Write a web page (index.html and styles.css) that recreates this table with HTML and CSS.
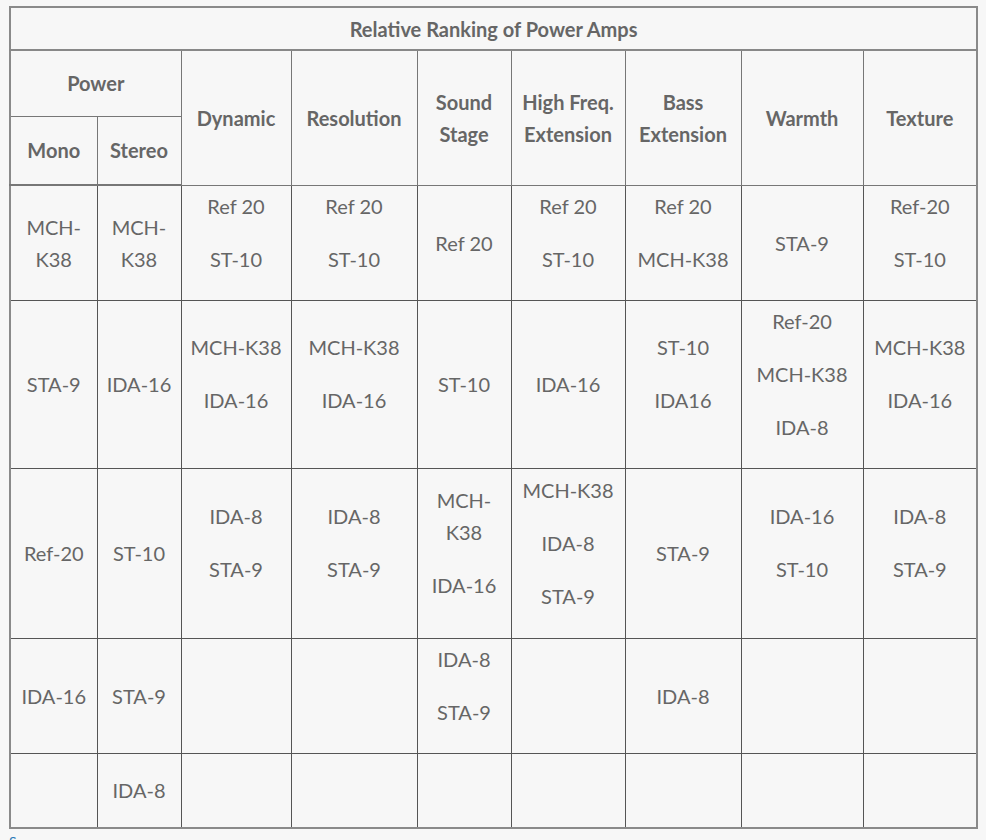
FILE: index.html
```html
<!DOCTYPE html>
<html>
<head>
<meta charset="utf-8">
<link rel="stylesheet" href="styles.css">
</head>
<body>
<table class="rank">
  <colgroup>
    <col class="c1"><col class="c2"><col class="c3"><col class="c4"><col class="c5"><col class="c6"><col class="c7"><col class="c8"><col class="c9">
  </colgroup>
  <thead>
    <tr class="r-title"><th colspan="9">Relative Ranking of Power Amps</th></tr>
    <tr class="r-h1">
      <th colspan="2">Power</th>
      <th rowspan="2">Dynamic</th>
      <th rowspan="2">Resolution</th>
      <th rowspan="2">Sound Stage</th>
      <th rowspan="2">High Freq. Extension</th>
      <th rowspan="2">Bass Extension</th>
      <th rowspan="2">Warmth</th>
      <th rowspan="2">Texture</th>
    </tr>
    <tr class="r-h2"><th>Mono</th><th>Stereo</th></tr>
  </thead>
  <tbody>
    <tr class="r1">
      <td>MCH-K38</td>
      <td>MCH-K38</td>
      <td><p>Ref 20</p><p>ST-10</p></td>
      <td><p>Ref 20</p><p>ST-10</p></td>
      <td>Ref 20</td>
      <td><p>Ref 20</p><p>ST-10</p></td>
      <td><p>Ref 20</p><p>MCH-K38</p></td>
      <td>STA-9</td>
      <td><p>Ref-20</p><p>ST-10</p></td>
    </tr>
    <tr class="r2">
      <td>STA-9</td>
      <td>IDA-16</td>
      <td><p>MCH-K38</p><p>IDA-16</p></td>
      <td><p>MCH-K38</p><p>IDA-16</p></td>
      <td>ST-10</td>
      <td>IDA-16</td>
      <td><p>ST-10</p><p>IDA16</p></td>
      <td><p>Ref-20</p><p>MCH-K38</p><p>IDA-8</p></td>
      <td><p>MCH-K38</p><p>IDA-16</p></td>
    </tr>
    <tr class="r3">
      <td>Ref-20</td>
      <td>ST-10</td>
      <td><p>IDA-8</p><p>STA-9</p></td>
      <td><p>IDA-8</p><p>STA-9</p></td>
      <td><p>MCH-K38</p><p>IDA-16</p></td>
      <td><p>MCH-K38</p><p>IDA-8</p><p>STA-9</p></td>
      <td>STA-9</td>
      <td><p>IDA-16</p><p>ST-10</p></td>
      <td><p>IDA-8</p><p>STA-9</p></td>
    </tr>
    <tr class="r4">
      <td>IDA-16</td>
      <td>STA-9</td>
      <td></td>
      <td></td>
      <td><p>IDA-8</p><p>STA-9</p></td>
      <td></td>
      <td>IDA-8</td>
      <td></td>
      <td></td>
    </tr>
    <tr class="r5">
      <td></td>
      <td>IDA-8</td>
      <td></td><td></td><td></td><td></td><td></td><td></td><td></td>
    </tr>
  </tbody>
</table>
<p class="credit">Source</p>
</body>
</html>
```
FILE: styles.css
```css
html, body {
  background: #f7f7f7;
}
body {
  margin: 0;
  padding: 6px 0 0 9px;
  font-family: Lato, "Open Sans", sans-serif;
  color: #666;
  font-size: 20px;
}
.rank {
  table-layout: fixed;
  border-collapse: collapse;
  width: 967px;
  border: 2px solid #8a8a8a;
}
.c1 { width: 87px; }
.c2 { width: 84px; }
.c3 { width: 110px; }
.c4 { width: 126px; }
.c5 { width: 94px; }
.c6 { width: 114px; }
.c7 { width: 116px; }
.c8 { width: 122px; }
.c9 { width: 114px; }
.rank th, .rank td {
  border: 1px solid #555;
  padding: 4px 5px;
  text-align: center;
  vertical-align: middle;
  line-height: 32px;
  font-size: 20px;
}
.rank th {
  font-weight: 700;
  border-color: #777;
}
.rank thead tr:last-child th { border-bottom: 2px solid #777; }
.rank thead .r-title th { border-bottom: 2px solid #888; }
.rank td {
  font-weight: 400;
}
.rank p {
  margin: 0 0 21px;
}
.r-title { height: 43px; }
.r-h1 { height: 66px; }
.r-h2 { height: 69px; }
.r1 { height: 111px; }
.r2 { height: 166px; }
.r3 { height: 170px; }
.r4 { height: 115px; }
.r5 { height: 75px; }
.credit {
  margin: 4px 0 0 0;
  font-size: 14px;
  color: #2a7ab8;
}
```
